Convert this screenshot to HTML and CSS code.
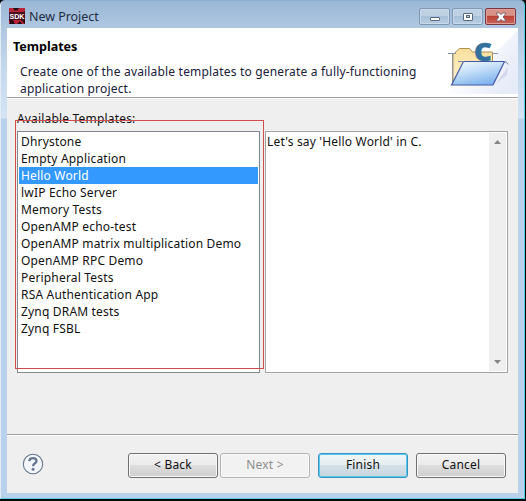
FILE: index.html
```html
<!DOCTYPE html>
<html lang="en">
<head>
<meta charset="utf-8">
<title>New Project</title>
<link rel="stylesheet" href="styles.css">
</head>
<body>
<div class="window">
  <header class="titlebar">
    <svg class="sdk" width="16" height="16" viewBox="0 0 16 16">
      <rect width="16" height="16" fill="#220b10"/>
      <path d="M0 0h4l2 3 3-3h7v3l-3 2 3 3v8h-3l-2-3-3 3H4l-2-2-2 2V9l2-2-2-2z" fill="#b92338"/>
      <path d="M6 0h4L8 3zM0 12l3-2 3 6H2zM16 9l-4 3 4 4z" fill="#270b12"/>
      <rect y="4" width="16" height="8" fill="#4a101c"/>
      <text x="8" y="11" text-anchor="middle" textLength="15" lengthAdjust="spacingAndGlyphs">SDK</text>
    </svg>
    <h1>New Project</h1>
    <div class="controls">
      <span class="ctl"><svg width="12" height="12"><rect x="1.500" y="6.500" width="9" height="3" rx=".5" fill="#fff" stroke="#59677a"/></svg></span>
      <span class="ctl"><svg width="12" height="12"><rect x="1.500" y="2.500" width="9" height="7" rx=".5" fill="#fff" stroke="#59677a"/><rect x="4.500" y="4.500" width="3" height="2" fill="#b3c9df" stroke="#59677a"/></svg></span>
      <span class="ctl close"><svg width="12" height="12"><path d="M1 2h3.500L6 3.700 7.500 2H11L8.200 6l2.800 4H7.500L6 8.300 4.500 10H1l2.800-4z" fill="#fff" stroke="#6d5664" stroke-width=".8"/></svg></span>
    </div>
  </header>
  <main class="client">
    <section class="banner">
      <div>
        <h2>Templates</h2>
        <p>Create one of the available templates to generate a fully-functioning<br>application project.</p>
      </div>
      <svg class="folder" width="75" height="66" viewBox="443 28 75 66">
        <defs>
          <linearGradient id="glow" gradientUnits="userSpaceOnUse" x1="470" y1="50" x2="518" y2="80"><stop stop-color="#fff"/><stop offset=".7" stop-color="#eceffa"/><stop offset="1" stop-color="#e6ebf8"/></linearGradient>
          <linearGradient id="front" x1="0" y1="0" x2=".5" y2="1"><stop stop-color="#fafdff"/><stop offset=".5" stop-color="#c3def8"/><stop offset="1" stop-color="#82b5ee"/></linearGradient>
          <linearGradient id="back" x1="0" y1="0" x2="0" y2="1"><stop stop-color="#f8df9d"/><stop offset="1" stop-color="#fff4cf"/></linearGradient>
        </defs>
        <path d="M443 94Q480 70 518 30V94z" fill="url(#glow)"/>
        <path d="M495 85l13-18-1 8-10 8z" fill="#d3d8ec"/>
        <path d="M452.500 83V54q3 0 4-3l3-2.500h10l3 3.500h20v31z" fill="url(#back)" stroke="#ae9150"/>
        <path d="M448 53.500h8M453 53v29M492 53.500h6" fill="none" stroke="#8995a5"/>
        <text class="letter" x="474" y="61" textLength="18" lengthAdjust="spacingAndGlyphs">C</text>
        <path d="M463.500 61.500H504.500L493 85H451.500z" fill="url(#front)" stroke="#4559a5" stroke-width="1.200"/>
        <path d="M458 61.500h6M504 61.500q3 0 4 3" fill="none" stroke="#7785ac"/>
      </svg>
    </section>
    <section class="body">
      <div class="label">Available Templates:</div>
      <div class="panes">
        <ul class="list">
          <li><span>Dhrystone</span></li>
          <li><span>Empty Application</span></li>
          <li class="selected"><span>Hello World</span></li>
          <li><span>lwIP Echo Server</span></li>
          <li><span>Memory Tests</span></li>
          <li><span>OpenAMP echo-test</span></li>
          <li><span>OpenAMP matrix multiplication Demo</span></li>
          <li><span>OpenAMP RPC Demo</span></li>
          <li><span>Peripheral Tests</span></li>
          <li><span>RSA Authentication App</span></li>
          <li><span>Zynq DRAM tests</span></li>
          <li><span>Zynq FSBL</span></li>
        </ul>
        <div class="description">
          <p>Let's say 'Hello World' in C.</p>
          <div class="scroll">
            <svg width="7" height="4"><path d="M0 4L3.500 0 7 4z" fill="#858585"/></svg>
            <svg width="7" height="4"><path d="M0 0h7L3.500 4z" fill="#858585"/></svg>
          </div>
        </div>
      </div>
      <div class="highlight"></div>
    </section>
    <footer>
      <svg class="help" width="22" height="22" viewBox="0 0 22 22">
        <circle cx="11" cy="11" r="9.700" fill="#f3f6fb" stroke="#65758b" stroke-width="1.100"/>
        <path d="M7.300 8.200Q7.500 5.200 11 5.200q3.500 0 3.500 2.700 0 1.500-1.800 2.600-1.600 1-1.600 2.700" fill="none" stroke="#687991" stroke-width="2.300"/>
        <circle cx="11.100" cy="16.200" r="1.500" fill="#687991"/>
      </svg>
      <button>&lt; Back</button>
      <button class="next" disabled>Next &gt;</button>
      <button class="finish">Finish</button>
      <button class="cancel">Cancel</button>
    </footer>
  </main>
</div>
</body>
</html>
```
FILE: styles.css
```css
* { box-sizing: border-box; }
body {
  margin: 0;
  width: 526px;
  height: 501px;
  overflow: hidden;
  background: #05080b;
  font: 12px/17px "Noto Sans", "Open Sans", sans-serif;
  letter-spacing: .18px;
  color: #111;
}
h1, h2, p, ul { margin: 0; padding: 0; font-weight: 400; }
.window {
  width: 525px;
  height: 499px;
  padding: 0 6px 5px;
  border: 1px solid #4fd0dc;
  border-top-color: #8fb0d0;
  border-left-color: #e1edf8;
  border-radius: 5px 5px 0 0;
  background: linear-gradient(#9ab7d5, #b1c8e1 28px, #c6d9ed 70px, #d5e4f5 117px, #b9d1ea 118px);
}
.titlebar { height: 27px; display: flex; align-items: flex-start; padding: 7px 2px 0; }
.sdk { flex: none; }
.sdk text { font: bold 8px "Liberation Sans", sans-serif; letter-spacing: 0; fill: #fff; }
h1 { font-size: 12.5px; line-height: 18px; margin-left: 4px; color: #1c2c42; letter-spacing: -.05px; }
.controls { display: flex; gap: 2px; margin-left: auto; }
.ctl {
  width: 31px; height: 17px;
  display: flex; align-items: center; justify-content: center;
  border: 1px solid #7f98b4; border-radius: 2px;
  background: linear-gradient(#bdd0e4 45%, #a8c1da 50%, #b7cde3);
  box-shadow: inset 0 0 0 1px #c9d9ea;
}
.close { border-color: #793742; background: linear-gradient(#d99287 42%, #bd4338 50%, #cc655b); box-shadow: inset 0 0 0 1px #df9e97; }
.client { width: 511px; height: 465px; background: #efefef; }
.banner {
  height: 70px; padding-left: 6px;
  display: flex; justify-content: space-between;
  background: #fff; border-bottom: 1px solid #a0a0a0;
}
h2 { font-size: 12.6px; font-weight: 700; line-height: 18px; margin-top: 10px; letter-spacing: -.05px; color: #000; }
.banner p { margin: 7px 0 0 7px; white-space: nowrap; color: #20203a; }
.folder { flex: none; }
.letter { font: 800 25px "Open Sans", sans-serif; fill: #32719d; stroke: #32719d; stroke-width: .5px; }
.body { height: 336px; padding: 12px 10px 0; position: relative; box-shadow: inset 0 1px #fff; }
.label { height: 21px; line-height: 17px; }
.panes { display: flex; gap: 5px; }
.list { width: 243px; height: 242px; list-style: none; border: 1px solid #828790; background: #fff; padding: 1px; }
li { height: 17px; line-height: 17px; padding-left: 2px; white-space: nowrap; }
.list { padding-top: 1px; }
.selected { background: #3399ff; color: #fff; }
.description { width: 243px; height: 242px; display: flex; justify-content: space-between; border: 1px solid #a3a3a3; background: #fff; padding: 1px; }
.scroll { width: 17px; background: #efefef; display: flex; flex-direction: column; justify-content: space-between; align-items: center; padding: 7px 0; }
.highlight { position: absolute; left: 8px; top: 22px; width: 249px; height: 249px; border: 1px solid #d24b4e; }
footer { height: 59px; display: flex; align-items: flex-start; padding: 18px 12px 0 15px; border-top: 1px solid #a0a0a0; box-shadow: inset 0 1px #fff; }
.help { margin-right: 84px; flex: none; }
button {
  width: 90px; height: 25px; flex: none; padding: 0 0 2px; margin: 0;
  border: 1px solid #707070; border-radius: 3px;
  background: linear-gradient(#f2f2f2, #ebebeb 48%, #dddddd 50%, #cfcfcf);
  box-shadow: inset 0 0 0 1px #f8f8f8;
  font: inherit; letter-spacing: .2px; color: #111;
}
.next { margin-left: 2px; border-color: #b5b5b5; background: #f2f2f2; color: #8d8d8d; }
.finish { margin-left: 8px; border-color: #3c91bd; background: linear-gradient(#f1f6f8, #e5edf1 48%, #d5e1e8 50%, #c8d5dd); box-shadow: inset 0 0 0 1px #55c8ef; }
.cancel { margin-left: 8px; }
```
